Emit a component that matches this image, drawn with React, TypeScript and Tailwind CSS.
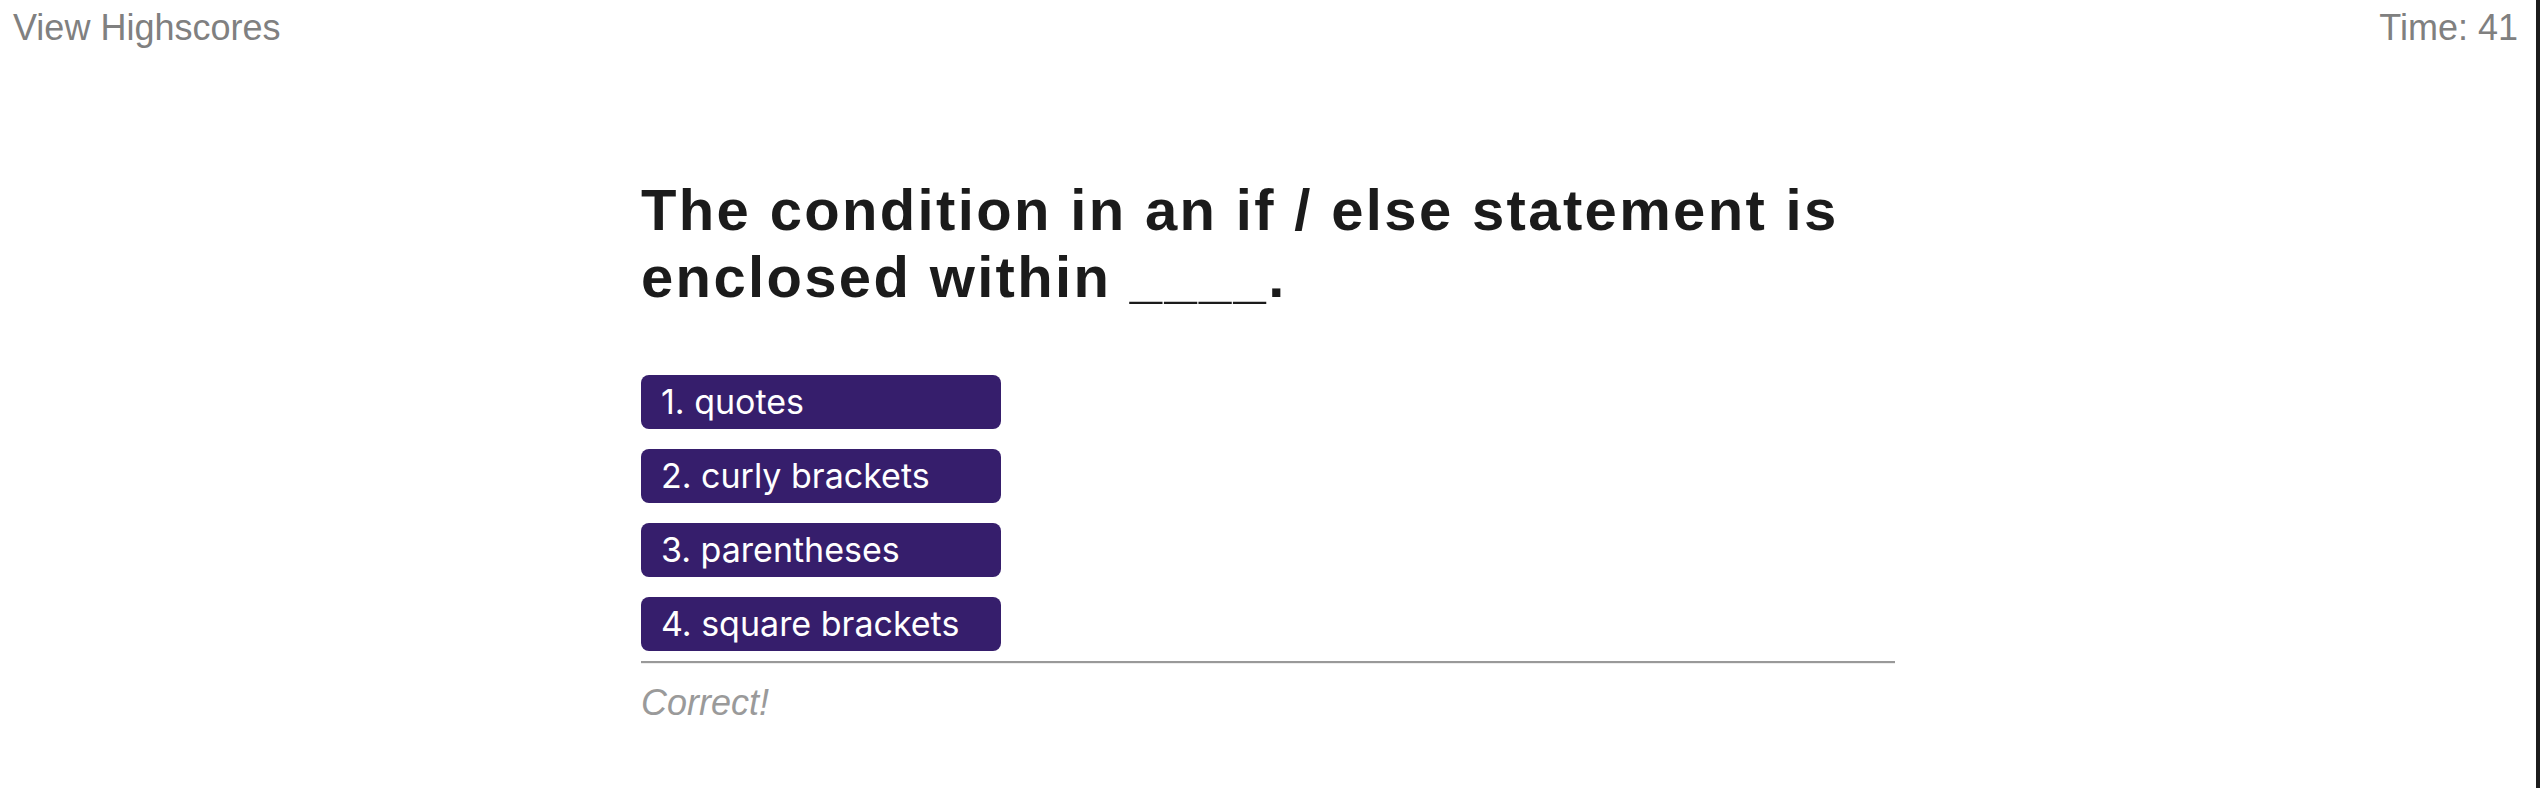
import React from "react";

const choices = ["1. quotes", "2. curly brackets", "3. parentheses", "4. square brackets"];

export default function App() {
  return (
    <div className="flex w-[2540px] h-[788px] bg-white overflow-hidden">
      <div className="flex-1 flex flex-col">
        <header className="flex justify-between pl-[13px] pr-[18px] pt-[7px] text-[36px] leading-[41px] text-[#808080] font-['Liberation_Sans',Arial,sans-serif]">
          <span>View Highscores</span>
          <span>Time: 41</span>
        </header>
        <main className="w-[1254px] mx-auto mt-[128px] flex flex-col">
          <h1 className="text-[58px] leading-[67px] font-bold tracking-[2.35px] text-[#1b1b1b] font-['Liberation_Sans',Arial,sans-serif]">
            The condition in an if / else statement is enclosed within ____.
          </h1>
          <div className="mt-[65px] flex flex-col gap-[20px]">
            {choices.map((c) => (
              <button
                key={c}
                className="w-[360px] h-[54px] rounded-[8px] bg-[#361e6c] text-white text-left pl-[20px] text-[34px] leading-[54px] font-['Inter',sans-serif]"
              >
                {c}
              </button>
            ))}
          </div>
          <div className="mt-[10px] h-0 border-t-2 border-t-[#999999] border-b border-b-[#eeeeee]" />
          <p className="mt-[18px] italic text-[36px] leading-[41px] text-[#9a9a9a] font-['Liberation_Sans',Arial,sans-serif]">
            Correct!
          </p>
        </main>
      </div>
      <div className="w-[4px] h-full bg-[#1c1c1c]" />
    </div>
  );
}
